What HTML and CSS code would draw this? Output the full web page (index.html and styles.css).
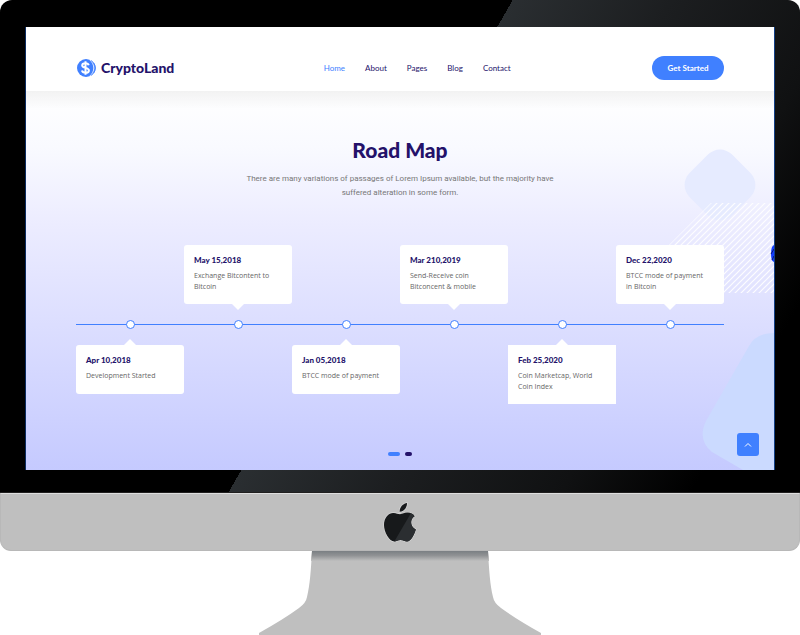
FILE: index.html
```html
<!DOCTYPE html>
<html lang="en">
<head>
<meta charset="utf-8">
<meta name="viewport" content="width=device-width, initial-scale=1">
<title>CryptoLand</title>
<link rel="stylesheet" href="styles.css">
</head>
<body>
<div class="monitor">
  <div class="bezel">
    <div class="screen">
      <header class="header">
        <a class="brand" href="#">
          <svg class="brand-icon" viewBox="0 0 20 20" aria-hidden="true">
            <circle cx="10" cy="10" r="9" fill="#4080ff"/>
            <path d="M14 2.2A10 10 0 0 1 14 17.8M16.6 4A10 10 0 0 1 16.6 16" fill="none" stroke="#fff" stroke-width=".8"/>
            <path d="M15.2 2.6A9 9 0 0 1 15.2 17.4M17.6 5A9 9 0 0 1 17.6 15" fill="none" stroke="#4080ff" stroke-width="1"/>
            <path d="M12.7 7.2C12.3 5.8 11.1 5.2 9.5 5.2C7.5 5.2 6.2 6.1 6.2 7.5C6.2 10.7 12.9 9 12.9 12.4C12.9 13.9 11.5 14.8 9.5 14.8C7.5 14.8 6.3 14 5.9 12.6M9.5 3.2V16.8" fill="none" stroke="#fff" stroke-width="2"/>
          </svg>
          <span>CryptoLand</span>
        </a>
        <nav class="nav">
          <a class="active" href="#">Home</a>
          <a href="#">About</a>
          <a href="#">Pages</a>
          <a href="#">Blog</a>
          <a href="#">Contact</a>
        </nav>
        <button class="cta" type="button">Get Started</button>
      </header>
      <main class="roadmap">
        <svg class="decor" viewBox="0 0 130 379" aria-hidden="true">
          <defs>
            <pattern id="stripes" width="6" height="6" patternUnits="userSpaceOnUse" x="1" y="4">
              <path d="M-1 7L7 -1M-1 1L1 -1M5 7L7 5" stroke="#fff" stroke-width="1.2" opacity=".9"/>
            </pattern>
          </defs>
          <rect x="46" y="64" width="60" height="60" rx="17" transform="rotate(45 76 94)" fill="#e6ebff"/>
          <path d="M67 112H130V202H-23Z" fill="url(#stripes)"/>
          <path d="M130 154Q127 155 127 163Q127 170 130 171Z" fill="#123cff"/>
          <path d="M127 163L130 158M128 169L130 165" stroke="#0a1a70"/>
          <path d="M130 242Q112 242 105 255L62 330Q53 349 68 361L99 379H130Z" fill="#cbdaff"/>
        </svg>
        <h1>Road Map</h1>
        <p class="intro">There are many variations of passages of Lorem Ipsum available, but the majority have suffered alteration in some form.</p>
        <ol class="timeline">
          <li class="stop below"><i class="dot"></i><article class="card"><h2>Apr 10,2018</h2><p>Development Started</p></article></li>
          <li class="stop above"><i class="dot"></i><article class="card"><h2>May 15,2018</h2><p>Exchange Bitcontent to Bitcoin</p></article></li>
          <li class="stop below"><i class="dot"></i><article class="card"><h2>Jan 05,2018</h2><p>BTCC mode of payment</p></article></li>
          <li class="stop above"><i class="dot"></i><article class="card"><h2>Mar 210,2019</h2><p>Send-Receive coin Bitconcent &amp; mobile</p></article></li>
          <li class="stop below"><i class="dot"></i><article class="card square"><h2>Feb 25,2020</h2><p>Coin Marketcap, World Coin Index</p></article></li>
          <li class="stop above"><i class="dot"></i><article class="card"><h2>Dec 22,2020</h2><p>BTCC mode of payment in Bitcoin</p></article></li>
        </ol>
        <div class="pager">
          <button class="page current" type="button" aria-label="Slide 1"></button>
          <button class="page" type="button" aria-label="Slide 2"></button>
        </div>
        <button class="to-top" type="button" aria-label="Back to top">
          <svg viewBox="0 0 8 8" aria-hidden="true"><path d="M1 5.5L4 2.5L7 5.5" fill="none" stroke="#fff"/></svg>
        </button>
      </main>
    </div>
  </div>
  <div class="chin">
    <svg class="apple" viewBox="0 0 34 42" aria-hidden="true">
      <defs><clipPath id="body"><path id="fruit" d="M17 12.2C19.5 12.2 21.5 10.6 24.5 10.6C27.4 10.6 30 12 31.6 14.2C26.4 17.2 27.2 25 32.8 27.4C31.5 31.8 28 39.5 24 39.5C21.5 39.5 20.5 38 17.6 38C14.6 38 13.6 39.5 11.2 39.5C6.6 39.5 1 30.5 1 23C1 15.5 5.7 10.9 10.3 10.9C13.3 10.9 15.3 12.2 17 12.2Z"/></clipPath></defs>
      <g stroke="#d8d8d8" stroke-width="1.4"><use href="#fruit"/><path d="M16.6 9.8C16.4 5.5 20 1.6 24 1C24.3 5.4 20.8 9.7 16.6 9.8Z"/></g>
      <use href="#fruit" fill="#17191b"/>
      <path d="M16.6 9.8C16.4 5.5 20 1.6 24 1C24.3 5.4 20.8 9.7 16.6 9.8Z" fill="#17191b"/>
      <path d="M28 11L11 40H34V11Z" fill="#2b2e31" clip-path="url(#body)"/>
    </svg>
  </div>
  <svg class="stand" viewBox="0 0 284 84" aria-hidden="true">
    <defs><linearGradient id="shade" x2="0" y2="1"><stop offset="0" stop-color="#7a7f83"/><stop offset=".45" stop-color="#909294"/><stop offset="1" stop-color="#bfbfbf"/></linearGradient></defs>
    <path d="M54 0H230C231 18 232 34 235 46Q236 52 243 57Q258 68 283 82V84H1V82Q26 68 41 57Q48 52 49 46C52 34 53 18 54 0Z" fill="#bfbfbf"/>
    <path d="M54 0H230L231 10H53Z" fill="url(#shade)"/>
  </svg>
</div>
</body>
</html>
```
FILE: styles.css
```css
* {
  box-sizing: border-box;
}

body {
  margin: 0;
  background: #fff;
  font-family: Lato, "Liberation Sans", sans-serif;
  color: #24126a;
}

h1, h2, p, ol {
  margin: 0;
  padding: 0;
}

a {
  color: inherit;
  text-decoration: none;
}

button {
  border: 0;
  padding: 0;
  font-family: inherit;
  cursor: pointer;
}

.bezel {
  padding: 27px 26px 22px;
  border-radius: 12px 12px 0 0;
  border-bottom: 1px solid #201f1f;
  background: linear-gradient(120deg, #000 47.3%, #2a2e31 47.3%, #1c1e20 62%, #101112 78%, #000 90%);
}

.screen {
  background: #fff;
  box-shadow: 1px 0 #123f86, -1px 0 #0c2c60;
}

.header {
  display: flex;
  justify-content: space-between;
  align-items: center;
  height: 64px;
  padding: 18px 50px 0;
}

.brand {
  display: flex;
  align-items: center;
  gap: 5px;
  font-size: 14px;
  line-height: 18px;
  font-weight: 900;
}

.brand-icon {
  width: 20px;
  height: 20px;
}

.nav {
  display: flex;
  gap: 20px;
  margin-left: 8px;
  font-size: 8px;
}

.nav .active {
  color: #4080ff;
}

.cta {
  width: 72px;
  height: 24px;
  border-radius: 12px;
  background: #4080ff;
  color: #fff;
  font-size: 8px;
  font-weight: 700;
}

.roadmap {
  position: relative;
  padding: 45px 50px 14px;
  background:
    linear-gradient(rgba(0, 0, 0, 0.05), rgba(0, 0, 0, 0) 18px),
    linear-gradient(#fff, #f9faff 15%, #ececff 35%, #c5caff);
}

.decor {
  position: absolute;
  right: 0;
  bottom: 0;
  width: 130px;
  height: 379px;
}

h1 {
  font-size: 21px;
  line-height: 28px;
  font-weight: 900;
  text-align: center;
}

.intro {
  max-width: 320px;
  margin: 8px auto 45px;
  color: #777;
  font-family: Roboto, "Liberation Sans", sans-serif;
  font-size: 8px;
  line-height: 14px;
  text-align: center;
}

.timeline {
  position: relative;
  display: grid;
  grid-template-columns: repeat(6, 1fr);
  list-style: none;
}

.timeline::before {
  content: "";
  position: absolute;
  top: 79px;
  left: 0;
  right: 0;
  height: 1px;
  background: #4080ff;
}

.stop {
  display: grid;
  grid-template-rows: 59px 41px 59px;
  justify-items: center;
}

.dot {
  position: relative;
  grid-area: 2 / 1;
  align-self: center;
  width: 9px;
  height: 9px;
  border: 1px solid #4080ff;
  border-radius: 50%;
  background: #fff;
}

.card {
  position: relative;
  width: 100%;
  padding: 10px 15px 10px 10px;
  border-radius: 3px;
  background: #fff;
}

.card::after {
  content: "";
  position: absolute;
  left: 50%;
  margin-left: -6px;
  border: 6px solid transparent;
}

.above .card {
  grid-area: 1 / 1;
}

.above .card::after {
  top: 100%;
  border-bottom: 0;
  border-top-color: #fff;
}

.below .card {
  grid-area: 3 / 1;
  align-self: start;
  padding-bottom: 13px;
}

.below .card.square {
  padding-bottom: 12px;
  border-radius: 0;
}

.below .card::after {
  bottom: 100%;
  border-top: 0;
  border-bottom-color: #fff;
}

.card h2 {
  margin-bottom: 4px;
  font-size: 8px;
  line-height: 11px;
  font-weight: 900;
}

.card p {
  color: #666;
  font-family: "Open Sans", "Liberation Sans", sans-serif;
  font-size: 7px;
  line-height: 11px;
}

.pager {
  display: flex;
  justify-content: center;
  gap: 5px;
  margin-top: 48px;
}

.page {
  width: 7px;
  height: 4px;
  border-radius: 2px;
  background: #24126a;
}

.page.current {
  width: 12px;
  background: #4080ff;
}

.to-top {
  position: absolute;
  right: 15px;
  bottom: 14px;
  display: grid;
  place-items: center;
  width: 22px;
  height: 23px;
  border-radius: 3px;
  background: #4080ff;
}

.to-top svg {
  width: 8px;
  height: 8px;
}

.chin {
  display: flex;
  justify-content: center;
  height: 58px;
  padding-top: 8px;
  border: 1px solid #b8b8b8;
  border-top-color: #dedede;
  border-radius: 0 0 11px 11px;
  background: #bfbfbf;
}

.apple {
  width: 34px;
  height: 42px;
}

.stand {
  display: block;
  width: 284px;
  height: 84px;
  margin: 0 auto;
}
```
